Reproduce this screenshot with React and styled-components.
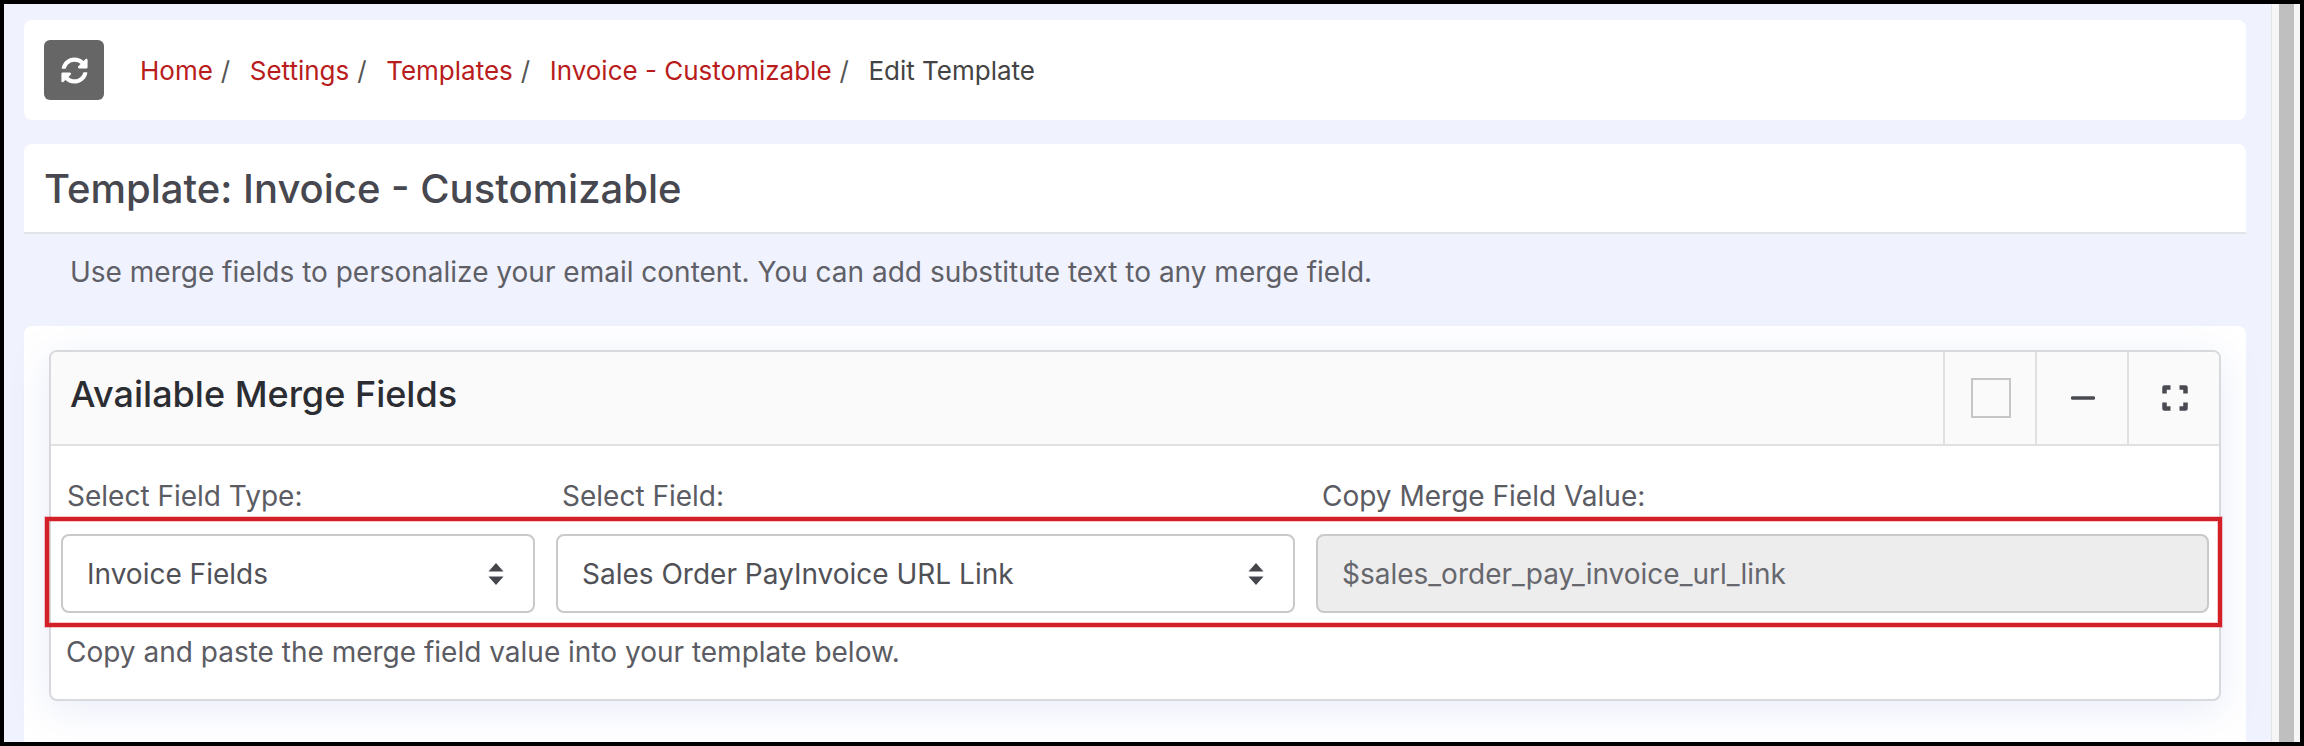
import React from "react";
import styled, { createGlobalStyle } from "styled-components";
import { FaSyncAlt } from "react-icons/fa";

const GlobalStyle = createGlobalStyle`
  html, body {
    margin: 0;
    padding: 0;
    background: #000;
    font-family: Inter, "Liberation Sans", sans-serif;
  }
  * {
    box-sizing: border-box;
  }
`;

const Frame = styled.div`
  width: 2304px;
  height: 746px;
  padding: 4px;
  background: #000;
  display: flex;
  overflow: hidden;
`;

const Page = styled.div`
  flex: 1;
  height: 738px;
  padding: 16px 25px 0 20px;
  background: #f0f2fd;
  overflow: hidden;
`;

const Scrollbar = styled.div`
  width: 29px;
  height: 738px;
  padding: 0 6px 0 7px;
  background: #f6f6f6;
  border-left: 1px solid #e4e4e4;
`;

const ScrollThumb = styled.div`
  height: 100%;
  background: #bfbfbf;
`;

const BreadcrumbCard = styled.div`
  height: 100px;
  padding: 0 20px;
  background: #fff;
  border-radius: 8px;
  display: flex;
  align-items: center;
`;

const RefreshButton = styled.div`
  width: 60px;
  height: 60px;
  margin-right: 36px;
  background: #666;
  border-radius: 6px;
  color: #fff;
  display: flex;
  align-items: center;
  justify-content: center;
  font-size: 27px;
`;

const Crumbs = styled.div`
  display: flex;
  font-size: 26px;
  color: #444;
`;

const Crumb = styled.span`
  color: ${(p) => (p.$active ? "#444" : "#b91c1c")};
`;

const Sep = styled.span`
  margin: 0 19.5px 0 8px;
  color: #555;
`;

const TitleCard = styled.div`
  height: 90px;
  margin-top: 24px;
  padding: 0 20px;
  background: #fff;
  border-radius: 8px 8px 0 0;
  border-bottom: 2px solid #e3e4ea;
  display: flex;
  align-items: center;
`;

const Title = styled.h1`
  margin: 0;
  font-size: 40px;
  font-weight: 500;
  color: #46474f;
`;

const Hint = styled.p`
  margin: 0;
  padding: 21px 0 0 46px;
  height: 92px;
  font-size: 28px;
  line-height: 34px;
  color: #5f6067;
`;

const MainCard = styled.div`
  padding: 24px 25px 60px;
  background: #fff;
  border-radius: 8px 8px 0 0;
`;

const Panel = styled.div`
  position: relative;
  border: 2px solid #d8d9dd;
  border-radius: 8px;
  background: #fff;
  box-shadow: 0 8px 40px rgba(120, 135, 220, 0.16);
`;

const PanelHeader = styled.div`
  height: 94px;
  padding: 0 0 0 19px;
  background: #fafafa;
  border-bottom: 2px solid #e0e0e0;
  border-radius: 6px 6px 0 0;
  display: flex;
  align-items: center;
`;

const PanelTitle = styled.h2`
  margin: 0 0 8px;
  flex: 1;
  font-size: 36px;
  font-weight: 500;
  color: #2c2d33;
`;

const HeaderAction = styled.div`
  width: 92px;
  height: 100%;
  padding-left: 2px;
  border-left: 2px solid #e0e0e0;
  display: flex;
  align-items: center;
  justify-content: center;
  color: #4a4b52;
`;

const CheckBox = styled.div`
  width: 40px;
  height: 40px;
  border: 2px solid #c6c6c6;
  background: #fafafa;
`;

const PanelBody = styled.div`
  padding: 33px 10px 30px;
`;

const FieldRow = styled.div`
  display: grid;
  grid-template-columns: 474px 739px 893px;
  column-gap: 21px;
`;

const Field = styled.div`
  display: flex;
  flex-direction: column;
`;

const FieldLabel = styled.label`
  height: 55px;
  padding-left: 6px;
  font-size: 28px;
  line-height: 34px;
  color: #5b5c63;
`;

const SelectBox = styled.div`
  height: 79px;
  padding: 0 29px 0 24px;
  border: 2px solid #c9c9c9;
  border-radius: 8px;
  background: ${(p) => (p.$readOnly ? "#ededed" : "#fff")};
  display: flex;
  align-items: center;
  justify-content: space-between;
  font-size: 28px;
  color: ${(p) => (p.$readOnly ? "#66676d" : "#505157")};
`;

const HelpText = styled.p`
  margin: 0;
  padding: 22px 0 0 5px;
  font-size: 28px;
  line-height: 34px;
  color: #5b5c63;
`;

// annotation box drawn over the screenshot
const Highlight = styled.div`
  position: absolute;
  left: -6px;
  top: 165px;
  width: 2177px;
  height: 110px;
  border: 4px solid #d32027;
  box-shadow: 0 0 0 1px rgba(211, 32, 39, 0.25), inset 0 0 0 1px rgba(211, 32, 39, 0.25);
  pointer-events: none;
`;

const ChevronPair = () => (
  <svg width="16" height="24" viewBox="0 0 16 24" fill="#45464c">
    <path d="M8 1 L15.500 9.500 H0.500 Z" />
    <path d="M8 23 L15.500 14.500 H0.500 Z" />
  </svg>
);

const MinusIcon = () => (
  <svg width="24" height="6" viewBox="0 0 24 6">
    <path d="M1.500 3 H22.500" stroke="#4a4b52" strokeWidth="3.500" strokeLinecap="round" />
  </svg>
);

const ExpandIcon = () => (
  <svg
    width="26"
    height="26"
    viewBox="0 0 26 26"
    fill="none"
    stroke="#4a4b52"
    strokeWidth="4.500"
    strokeLinejoin="round"
  >
    <path d="M2.500 8.500 V2.500 H8.500" />
    <path d="M17.500 2.500 H23.500 V8.500" />
    <path d="M2.500 17.500 V23.500 H8.500" />
    <path d="M17.500 23.500 H23.500 V17.500" />
  </svg>
);

const crumbs = ["Home", "Settings", "Templates", "Invoice - Customizable"];

const App = () => {
  return (
    <>
      <GlobalStyle />
      <Frame>
        <Page>
          <BreadcrumbCard>
            <RefreshButton>
              <FaSyncAlt />
            </RefreshButton>
            <Crumbs>
              {crumbs.map((c) => (
                <React.Fragment key={c}>
                  <Crumb>{c}</Crumb>
                  <Sep>/</Sep>
                </React.Fragment>
              ))}
              <Crumb $active>Edit Template</Crumb>
            </Crumbs>
          </BreadcrumbCard>
          <TitleCard>
            <Title>Template: Invoice - Customizable</Title>
          </TitleCard>
          <Hint>
            Use merge fields to personalize your email content. You can add
            substitute text to any merge field.
          </Hint>
          <MainCard>
            <Panel>
              <PanelHeader>
                <PanelTitle>Available Merge Fields</PanelTitle>
                <HeaderAction>
                  <CheckBox />
                </HeaderAction>
                <HeaderAction>
                  <MinusIcon />
                </HeaderAction>
                <HeaderAction>
                  <ExpandIcon />
                </HeaderAction>
              </PanelHeader>
              <PanelBody>
                <FieldRow>
                  <Field>
                    <FieldLabel>Select Field Type:</FieldLabel>
                    <SelectBox>
                      Invoice Fields
                      <ChevronPair />
                    </SelectBox>
                  </Field>
                  <Field>
                    <FieldLabel>Select Field:</FieldLabel>
                    <SelectBox>
                      Sales Order PayInvoice URL Link
                      <ChevronPair />
                    </SelectBox>
                  </Field>
                  <Field>
                    <FieldLabel>Copy Merge Field Value:</FieldLabel>
                    <SelectBox $readOnly>$sales_order_pay_invoice_url_link</SelectBox>
                  </Field>
                </FieldRow>
                <HelpText>Copy and paste the merge field value into your template below.</HelpText>
              </PanelBody>
              <Highlight />
            </Panel>
          </MainCard>
        </Page>
        <Scrollbar>
          <ScrollThumb />
        </Scrollbar>
      </Frame>
    </>
  );
};

export default App;
